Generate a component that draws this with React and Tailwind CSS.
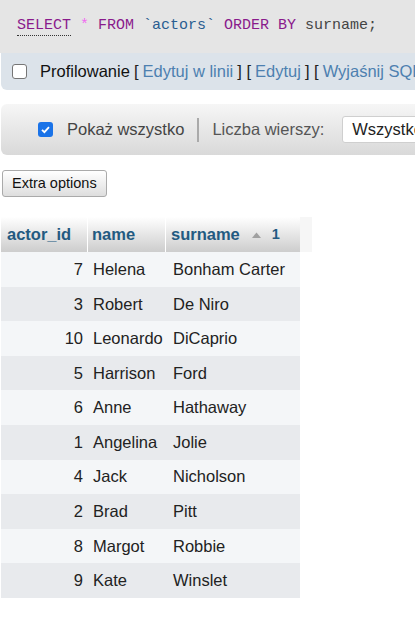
import { useState } from 'react'

const actors = [
  { id: 7, name: 'Helena', surname: 'Bonham Carter' },
  { id: 3, name: 'Robert', surname: 'De Niro' },
  { id: 10, name: 'Leonardo', surname: 'DiCaprio' },
  { id: 5, name: 'Harrison', surname: 'Ford' },
  { id: 6, name: 'Anne', surname: 'Hathaway' },
  { id: 1, name: 'Angelina', surname: 'Jolie' },
  { id: 4, name: 'Jack', surname: 'Nicholson' },
  { id: 2, name: 'Brad', surname: 'Pitt' },
  { id: 8, name: 'Margot', surname: 'Robbie' },
  { id: 9, name: 'Kate', surname: 'Winslet' },
]

const App = () => {
  const [showAll, setShowAll] = useState(true)
  const [profiling, setProfiling] = useState(false)

  return (
    <div className="w-[415px] h-[618px] overflow-hidden bg-white font-['Liberation_Sans',Arial,sans-serif] text-[16.5px] text-[#222]">
      {/* SQL query */}
      <div className="h-[53px] bg-[#e5e5e5] flex items-center pl-[17px] whitespace-nowrap font-['Liberation_Mono','DejaVu_Sans_Mono',monospace] text-[15px] text-[#444]">
        <span className="text-[#8a1a8c] border-b border-dotted border-[#333] leading-[18px]">SELECT</span>
        <span className="text-[#f06cf0] ml-[9px]">*</span>
        <span className="text-[#8a1a8c] ml-[9px]">FROM</span>
        <span className="text-[#2a5d91] ml-[9px]">`actors`</span>
        <span className="text-[#8a1a8c] ml-[9px]">ORDER BY</span>
        <span className="ml-[9px]">surname;</span>
      </div>

      {/* Profiling bar */}
      <div className="h-[37px] ml-px bg-[#dce3ea] rounded-bl-[6px] flex items-center pl-[11px] whitespace-nowrap overflow-hidden">
        <button
          onClick={() => setProfiling(!profiling)}
          className="w-[15px] h-[15px] rounded-[3px] border border-[#767676] bg-white shrink-0"
        />
        <span className="ml-[13px] text-[#111]">Profilowanie</span>
        <span className="ml-[4px]">[</span>
        <a className="ml-[4px] text-[#4d80b0]">Edytuj w linii</a>
        <span className="ml-[4px]">] [</span>
        <a className="ml-[4px] text-[#4d80b0]">Edytuj</a>
        <span className="ml-[4px]">] [</span>
        <a className="ml-[4px] text-[#4d80b0]">Wyjaśnij SQL</a>
        <span className="ml-[4px]">]</span>
      </div>

      {/* Navigation toolbar */}
      <div className="mt-[14px] ml-px h-[51px] rounded-l-[6px] bg-gradient-to-b from-[#f6f6f6] to-[#d9d9d9] flex items-center whitespace-nowrap">
        <button
          onClick={() => setShowAll(!showAll)}
          className={`ml-[37px] w-[15px] h-[15px] rounded-[3px] flex items-center justify-center shrink-0 ${
            showAll ? 'bg-[#1a73e8]' : 'bg-white border border-[#767676]'
          }`}
        >
          {showAll && (
            <svg width="11" height="11" viewBox="0 0 12 12">
              <path d="M2.2 6.3 L4.8 8.9 L9.8 3.4" fill="none" stroke="white" strokeWidth="2" />
            </svg>
          )}
        </button>
        <span className="ml-[14px] text-[#444]">Pokaż wszystko</span>
        <span className="ml-[13px] w-[2px] h-[24px] bg-[#aaaaaa] shrink-0" />
        <span className="ml-[13px] text-[#555]">Liczba wierszy:</span>
        <div className="ml-[18px] h-[27px] px-[9px] flex items-center bg-white border border-[#cfcfcf] rounded-[3px] text-[#222] shrink-0">
          Wszystko
        </div>
      </div>

      {/* Extra options */}
      <button className="mt-[15px] ml-[2px] h-[27px] px-[9px] text-[14.5px] text-[#111] border border-[#aaa] rounded-[3px] bg-gradient-to-b from-white to-[#dedede]">
        Extra options
      </button>

      {/* Results table */}
      <div className="mt-[20px] ml-px w-[312px]">
        <div className="flex h-[35px] font-bold text-[#235a81]">
          <div className="w-[87px] pl-[6px] flex items-center bg-gradient-to-b from-white to-[#cdcdcd] border-r border-white">
            actor_id
          </div>
          <div className="w-[78px] pl-[4px] flex items-center bg-gradient-to-b from-white to-[#cdcdcd] border-r border-white">
            name
          </div>
          <div className="w-[134px] pl-[5px] flex items-center bg-gradient-to-b from-white to-[#cdcdcd]">
            surname
            <svg className="ml-[12px]" width="9" height="6" viewBox="0 0 9 6">
              <path d="M0 6 L4.5 0.5 L9 6 Z" fill="#a0a0a0" />
            </svg>
            <span className="ml-[11px] text-[14.5px]">1</span>
          </div>
          <div className="w-[12px] bg-[#f6f6f6]" />
        </div>
        {actors.map((a, i) => (
          <div
            key={a.id}
            className={`flex h-[34.6px] w-[299px] items-center ${i % 2 === 0 ? 'bg-[#f4f6f8]' : 'bg-[#e8eaed]'}`}
          >
            <div className="w-[82px] text-right">{a.id}</div>
            <div className="w-[84px] pl-[10px]">{a.name}</div>
            <div className="pl-[6px] whitespace-nowrap">{a.surname}</div>
          </div>
        ))}
      </div>
    </div>
  )
}

export default App
